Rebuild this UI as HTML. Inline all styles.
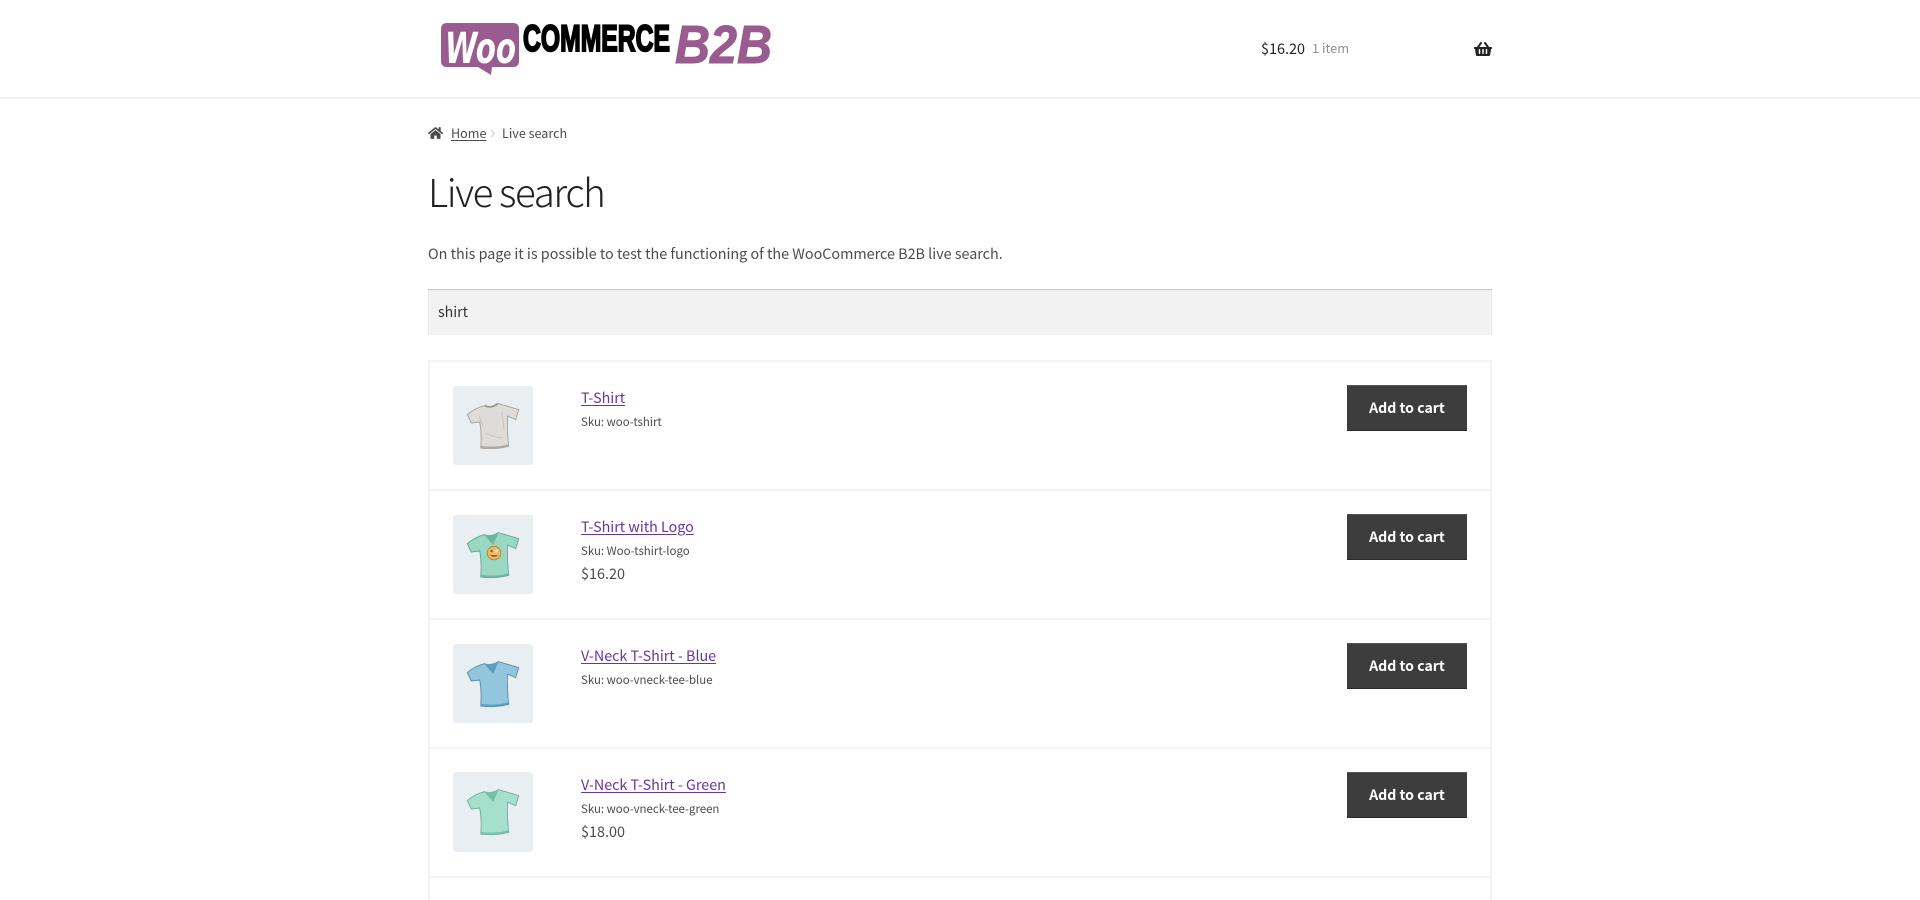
<!DOCTYPE html>
<html lang="en">
<head>
<meta charset="utf-8">
<title>Live search</title>
<style>
html,body{margin:0;padding:0;background:#fff;width:1920px;height:900px;overflow:hidden}
body{position:relative;font-family:"Noto Sans CJK JP","Liberation Sans",sans-serif;color:#4a4c52}
.a{position:absolute;white-space:nowrap;line-height:1}
.hb{position:absolute;left:0;top:97px;width:1920px;height:2px;background:#f3f3f3}
.input{position:absolute;left:428px;top:289px;width:1064px;height:46px;background:#f2f2f2;box-shadow:inset 0 1px 1px rgba(0,0,0,.2)}
.list{position:absolute;left:428px;top:360px;width:1060px;height:560px;border:2px solid #f4f4f4}
.div{position:absolute;left:428px;width:1064px;height:2px;background:#f4f4f4}
.thumb{position:absolute;left:453px;width:80px;height:79.5px;background:#e8eef2;border-radius:3px}
.thumb svg{display:block}
.t{left:581px;font-size:14.3px;color:#6634a5;text-decoration:underline;text-underline-offset:2px}
.s{left:581px;font-size:11.45px;color:#4a4c52}
.p{left:581px;font-size:14.4px;color:#4a4c52}
.btn{position:absolute;left:1347px;width:120px;height:46px;background:#3d3d3d;border-top:1px solid #555;border-bottom:1px solid #2a2a2a;box-sizing:border-box;color:#fff;font-weight:700;font-size:14.1px;text-align:center;line-height:44px}
</style>
</head>
<body>
<svg class="a" style="left:436px;top:18px" width="340" height="62" viewBox="0 0 340 62">
<path d="M11 5H77Q83 5 83 11V43Q83 49 77 49H56L55 57 42 49H11Q5 49 5 43V11Q5 5 11 5Z" fill="#9a5b90"/>
<text x="9" y="45" font-family="DejaVu Sans" font-weight="700" font-style="oblique" font-size="43" fill="#fff" textLength="71" lengthAdjust="spacingAndGlyphs">Woo</text>
<text x="87" y="33" font-family="Liberation Sans" font-weight="700" font-size="37" fill="#000" stroke="#000" stroke-width="2" textLength="147" lengthAdjust="spacingAndGlyphs">COMMERCE</text>
<text x="239" y="45" font-family="Liberation Sans" font-weight="700" font-style="italic" font-size="54" fill="#9a5b90" stroke="#9a5b90" stroke-width="1" textLength="97" lengthAdjust="spacingAndGlyphs">B2B</text>
</svg>
<div class="hb"></div>
<div class="a" style="left:1261px;top:42px;font-size:14.4px;color:#222">$16.20</div>
<div class="a" style="left:1312px;top:42px;font-size:12.8px;color:#8f8f8f">1 item</div>
<svg class="a" style="left:1474px;top:41px" width="18" height="16" viewBox="0 0 576 512"><path fill="#222" d="M576 216v16c0 13.255-10.745 24-24 24h-8l-26.113 182.788C514.509 462.435 494.257 480 470.37 480H105.63c-23.887 0-44.139-17.565-47.518-41.212L32 256h-8c-13.255 0-24-10.745-24-24v-16c0-13.255 10.745-24 24-24h67.341l106.78-146.821c10.395-14.292 30.407-17.453 44.701-7.058 14.293 10.395 17.453 30.408 7.058 44.701L170.477 192h235.046L326.12 82.821c-10.395-14.292-7.234-34.306 7.059-44.701 14.291-10.395 34.306-7.235 44.701 7.058L484.659 192H552c13.255 0 24 10.745 24 24zM312 392V280c0-13.255-10.745-24-24-24s-24 10.745-24 24v112c0 13.255 10.745 24 24 24s24-10.745 24-24zm112 0V280c0-13.255-10.745-24-24-24s-24 10.745-24 24v112c0 13.255 10.745 24 24 24s24-10.745 24-24zm-224 0V280c0-13.255-10.745-24-24-24s-24 10.745-24 24v112c0 13.255 10.745 24 24 24s24-10.745 24-24z"/></svg>

<svg class="a" style="left:428px;top:126px" width="15" height="14" viewBox="0 0 576 512"><path fill="#4a4c52" d="M280.37 148.26L96 300.11V464a16 16 0 0 0 16 16l112.06-.29a16 16 0 0 0 15.92-16V368a16 16 0 0 1 16-16h64a16 16 0 0 1 16 16v95.64a16 16 0 0 0 16 16.05L464 480a16 16 0 0 0 16-16V300L295.67 148.26a12.19 12.19 0 0 0-15.3 0zM571.6 251.47L488 182.56V44.05a12 12 0 0 0-12-12h-56a12 12 0 0 0-12 12v72.61L318.47 43a48 48 0 0 0-61 0L4.34 251.47a12 12 0 0 0-1.6 16.9l25.5 31A12 12 0 0 0 45.15 301l235.22-193.74a12.19 12.19 0 0 1 15.3 0L530.9 301a12 12 0 0 0 16.9-1.6l25.5-31a12 12 0 0 0-1.7-16.93z"/></svg>
<div class="a" style="left:451px;top:127px;font-size:12.6px;text-decoration:underline;text-underline-offset:2px">Home</div>
<svg class="a" style="left:490px;top:129px" width="6" height="9" viewBox="0 0 6 9"><path d="M1 1l3.5 3.5L1 8" fill="none" stroke="#c8c8c8" stroke-width="1"/></svg>
<div class="a" style="left:502px;top:127px;font-size:12.6px">Live search</div>

<h1 class="a" style="left:428px;top:172px;margin:0;font-size:38.5px;font-weight:300;color:#222;letter-spacing:-1.4px">Live search</h1>
<div class="a" style="left:428px;top:247px;font-size:14.35px">On this page it is possible to test the functioning of the WooCommerce B2B live search.</div>

<div class="input"></div>
<div class="a" style="left:438px;top:305px;font-size:14.2px;color:#333">shirt</div>

<div class="list"></div>
<div class="div" style="top:489px"></div>
<div class="div" style="top:618px"></div>
<div class="div" style="top:747px"></div>
<div class="div" style="top:876px"></div>

<div class="thumb" style="top:385.7px"><svg width="80" height="80" viewBox="0 0 80 80"><path d="M31.7 19.6Q38 23 45 17.5L65.7 23.6 62.7 33.6 54.5 30Q54 45 55.7 60.3Q42 64 27.7 62Q29 48 26.7 36L18.3 37 14.3 28.6Q22 22 31.7 19.6Z" fill="#dedcd9" stroke="#a5a39f" stroke-width=".9"/><path d="M31.7 19.6Q38 23 45 17.5" fill="none" stroke="#9a9894" stroke-width="1.8"/><path d="M27.5 60.5Q42 63 55.6 59" fill="none" stroke="#aaa8a4" stroke-width="1.6"/><path d="M26 30L30 40M33 47Q42 52 50 52M49 26L51 44" fill="none" stroke="#c5c3c0" stroke-width=".9"/></svg></div>
<div class="a t" style="top:391px">T-Shirt</div>
<div class="a s" style="top:417px">Sku: woo-tshirt</div>
<div class="btn" style="top:385px">Add to cart</div>

<div class="thumb" style="top:514.6px"><svg width="80" height="80" viewBox="0 0 80 80"><path d="M31.7 19.6L40 29 45 17.5 65.7 23.6 62.7 33.6 54.5 30Q54 45 55.7 60.3Q42 64 27.7 62Q29 48 26.7 36L18.3 37 14.3 28.6Q22 22 31.7 19.6Z" fill="#9bd8c3" stroke="#5fa892" stroke-width=".9"/><path d="M31.7 19.6L40 29 45 17.5Q38 21 31.7 19.6Z" fill="#6fb6a2"/><path d="M27.5 60.5Q42 63 55.6 59" fill="none" stroke="#6fb6a2" stroke-width="1.6"/><circle cx="41" cy="38" r="6.8" fill="#eeb95f" stroke="#a9823f" stroke-width=".8"/><circle cx="38.5" cy="36" r="1.1" fill="#555"/><circle cx="43.5" cy="36" r="1.6" fill="#d8e4e8"/><path d="M37 40Q41 44 45 40" fill="#a85a3a"/></svg></div>
<div class="a t" style="top:520px">T-Shirt with Logo</div>
<div class="a s" style="top:546px">Sku: Woo-tshirt-logo</div>
<div class="a p" style="top:567px">$16.20</div>
<div class="btn" style="top:514px">Add to cart</div>

<div class="thumb" style="top:643.5px"><svg width="80" height="80" viewBox="0 0 80 80"><path d="M31.7 19.6L40 29 45 17.5 65.7 23.6 62.7 33.6 54.5 30Q54 45 55.7 60.3Q42 64 27.7 62Q29 48 26.7 36L18.3 37 14.3 28.6Q22 22 31.7 19.6Z" fill="#92c6dd" stroke="#4f90ad" stroke-width=".9"/><path d="M31.7 19.6L40 29 45 17.5Q38 21 31.7 19.6Z" fill="#5f9fba"/><path d="M27.5 60.5Q42 63 55.6 59" fill="none" stroke="#5f9fba" stroke-width="1.6"/></svg></div>
<div class="a t" style="top:649px">V-Neck T-Shirt - Blue</div>
<div class="a s" style="top:675px">Sku: woo-vneck-tee-blue</div>
<div class="btn" style="top:643px">Add to cart</div>

<div class="thumb" style="top:772.4px"><svg width="80" height="80" viewBox="0 0 80 80"><path d="M31.7 19.6L40 29 45 17.5 65.7 23.6 62.7 33.6 54.5 30Q54 45 55.7 60.3Q42 64 27.7 62Q29 48 26.7 36L18.3 37 14.3 28.6Q22 22 31.7 19.6Z" fill="#a5e0cd" stroke="#68b19c" stroke-width=".9"/><path d="M31.7 19.6L40 29 45 17.5Q38 21 31.7 19.6Z" fill="#79c0ab"/><path d="M27.5 60.5Q42 63 55.6 59" fill="none" stroke="#79c0ab" stroke-width="1.6"/></svg></div>
<div class="a t" style="top:778px">V-Neck T-Shirt - Green</div>
<div class="a s" style="top:804px">Sku: woo-vneck-tee-green</div>
<div class="a p" style="top:825px">$18.00</div>
<div class="btn" style="top:772px">Add to cart</div>
</body>
</html>
